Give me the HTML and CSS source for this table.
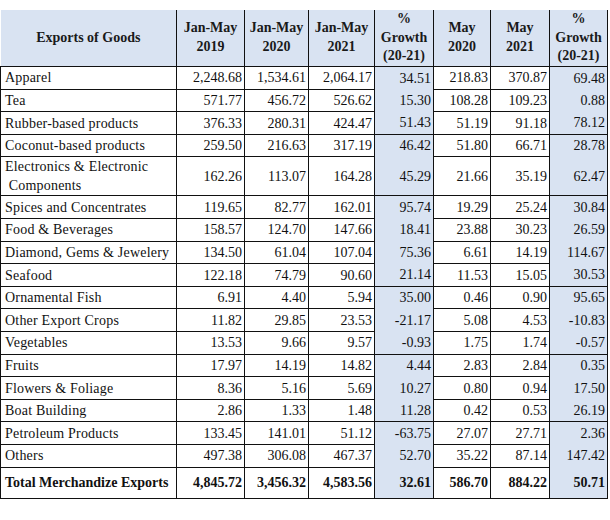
FILE: index.html
```html
<!DOCTYPE html>
<html>
<head>
<meta charset="utf-8">
<link rel="stylesheet" href="styles.css">
</head>
<body>
<table class="exports">
  <colgroup>
    <col class="c-name">
    <col class="c-a">
    <col class="c-b">
    <col class="c-c">
    <col class="c-g">
    <col class="c-d">
    <col class="c-e">
    <col class="c-g2">
  </colgroup>
  <thead>
    <tr>
      <th class="h-name">Exports of Goods</th>
      <th>Jan-May<br>2019</th>
      <th>Jan-May<br>2020</th>
      <th>Jan-May<br>2021</th>
      <th class="g">%<br>Growth<br>(20-21)</th>
      <th>May<br>2020</th>
      <th>May<br>2021</th>
      <th class="g">%<br>Growth<br>(20-21)</th>
    </tr>
  </thead>
  <tbody>
    <tr><td class="name">Apparel</td><td>2,248.68</td><td>1,534.61</td><td>2,064.17</td><td class="g">34.51</td><td>218.83</td><td>370.87</td><td class="g">69.48</td></tr>
    <tr><td class="name">Tea</td><td>571.77</td><td>456.72</td><td>526.62</td><td class="g">15.30</td><td>108.28</td><td>109.23</td><td class="g">0.88</td></tr>
    <tr><td class="name">Rubber-based products</td><td>376.33</td><td>280.31</td><td>424.47</td><td class="g ge">51.43</td><td>51.19</td><td>91.18</td><td class="g ge">78.12</td></tr>
    <tr><td class="name">Coconut-based products</td><td>259.50</td><td>216.63</td><td>317.19</td><td class="g">46.42</td><td>51.80</td><td>66.71</td><td class="g">28.78</td></tr>
    <tr class="tall"><td class="name">Electronics &amp; Electronic<br>&nbsp;Components</td><td>162.26</td><td>113.07</td><td>164.28</td><td class="g ge">45.29</td><td>21.66</td><td>35.19</td><td class="g ge">62.47</td></tr>
    <tr><td class="name">Spices and Concentrates</td><td>119.65</td><td>82.77</td><td>162.01</td><td class="g">95.74</td><td>19.29</td><td>25.24</td><td class="g">30.84</td></tr>
    <tr><td class="name">Food &amp; Beverages</td><td>158.57</td><td>124.70</td><td>147.66</td><td class="g">18.41</td><td>23.88</td><td>30.23</td><td class="g">26.59</td></tr>
    <tr><td class="name">Diamond, Gems &amp; Jewelery</td><td>134.50</td><td>61.04</td><td>107.04</td><td class="g">75.36</td><td>6.61</td><td>14.19</td><td class="g">114.67</td></tr>
    <tr><td class="name">Seafood</td><td>122.18</td><td>74.79</td><td>90.60</td><td class="g ge">21.14</td><td>11.53</td><td>15.05</td><td class="g ge">30.53</td></tr>
    <tr><td class="name">Ornamental Fish</td><td>6.91</td><td>4.40</td><td>5.94</td><td class="g">35.00</td><td>0.46</td><td>0.90</td><td class="g">95.65</td></tr>
    <tr><td class="name">Other Export Crops</td><td>11.82</td><td>29.85</td><td>23.53</td><td class="g">-21.17</td><td>5.08</td><td>4.53</td><td class="g">-10.83</td></tr>
    <tr><td class="name">Vegetables</td><td>13.53</td><td>9.66</td><td>9.57</td><td class="g ge">-0.93</td><td>1.75</td><td>1.74</td><td class="g ge">-0.57</td></tr>
    <tr><td class="name">Fruits</td><td>17.97</td><td>14.19</td><td>14.82</td><td class="g">4.44</td><td>2.83</td><td>2.84</td><td class="g">0.35</td></tr>
    <tr><td class="name">Flowers &amp; Foliage</td><td>8.36</td><td>5.16</td><td>5.69</td><td class="g">10.27</td><td>0.80</td><td>0.94</td><td class="g">17.50</td></tr>
    <tr><td class="name">Boat Building</td><td>2.86</td><td>1.33</td><td>1.48</td><td class="g ge">11.28</td><td>0.42</td><td>0.53</td><td class="g ge">26.19</td></tr>
    <tr><td class="name">Petroleum Products</td><td>133.45</td><td>141.01</td><td>51.12</td><td class="g">-63.75</td><td>27.07</td><td>27.71</td><td class="g">2.36</td></tr>
    <tr><td class="name">Others</td><td>497.38</td><td>306.08</td><td>467.37</td><td class="g">52.70</td><td>35.22</td><td>87.14</td><td class="g">147.42</td></tr>
    <tr class="total"><td class="name">Total Merchandize Exports</td><td>4,845.72</td><td>3,456.32</td><td>4,583.56</td><td class="g ge">32.61</td><td>586.70</td><td>884.22</td><td class="g ge">50.71</td></tr>
  </tbody>
</table>
</body>
</html>
```
FILE: styles.css
```css
html, body {
  margin: 0;
  padding: 0;
  background: #ffffff;
}
body {
  padding-top: 10px;
  font-family: "Liberation Serif", "Times New Roman", serif;
  color: #111111;
}
.exports {
  border-collapse: collapse;
  table-layout: fixed;
  width: 607px;
  font-size: 14px;
}
.c-name { width: 176px; }
.c-a { width: 68px; }
.c-b { width: 64px; }
.c-c { width: 66px; }
.c-g { width: 59px; }
.c-d { width: 57px; }
.c-e { width: 59px; }
.c-g2 { width: 58px; }

.exports th {
  background: #d9e3f2;
  font-weight: bold;
  text-align: center;
  line-height: 18.7px;
  height: 56px;
  padding: 0 1px;
  border-left: 1px solid #111;
  border-right: 1px solid #111;
  border-bottom: 1px solid #111;
  border-top: none;
  color: #1a1a1a;
}
.exports th.h-name {
  border-left: none;
}
.exports td {
  height: 21.6px;
  padding: 0 2px 0 4px;
  text-align: right;
  border: 1px solid #111;
  line-height: 17px;
  white-space: nowrap;
}
.exports td.name {
  text-align: left;
  padding-left: 4px;
  letter-spacing: 0.2px;
}
.exports td.g {
  background: #d9e3f2;
  border-top: none;
  border-bottom: none;
}
.exports td.g.ge {
  border-bottom: 1px solid #111;
}
.exports tr.tall td {
  height: 36.5px;
  line-height: 19px;
}
.exports tr.total td {
  height: 30.5px;
  font-weight: bold;
  letter-spacing: 0;
}
```
